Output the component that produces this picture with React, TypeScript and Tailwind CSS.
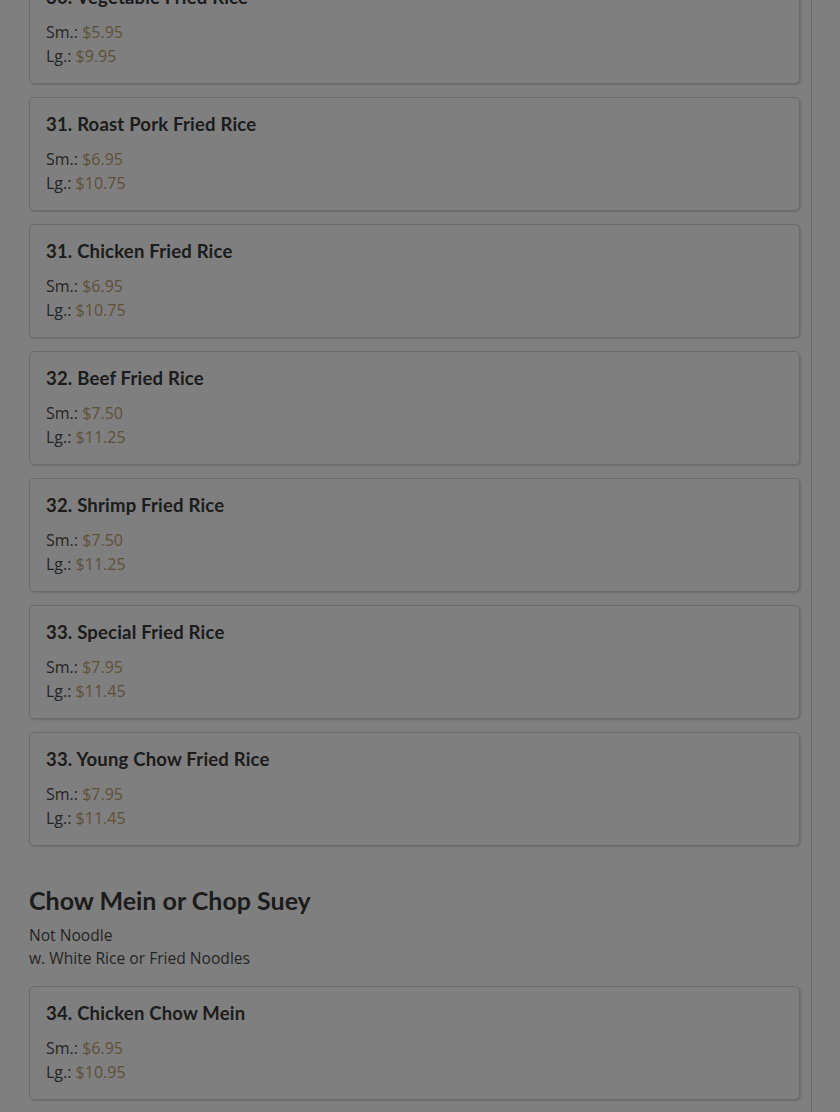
import React from "react";

type Item = { name: string; sm: string; lg: string };

const friedRice: Item[] = [
  { name: "30. Vegetable Fried Rice", sm: "$5.95", lg: "$9.95" },
  { name: "31. Roast Pork Fried Rice", sm: "$6.95", lg: "$10.75" },
  { name: "31. Chicken Fried Rice", sm: "$6.95", lg: "$10.75" },
  { name: "32. Beef Fried Rice", sm: "$7.50", lg: "$11.25" },
  { name: "32. Shrimp Fried Rice", sm: "$7.50", lg: "$11.25" },
  { name: "33. Special Fried Rice", sm: "$7.95", lg: "$11.45" },
  { name: "33. Young Chow Fried Rice", sm: "$7.95", lg: "$11.45" },
];

const chowMein: Item[] = [{ name: "34. Chicken Chow Mein", sm: "$6.95", lg: "$10.95" }];

const body = { fontFamily: '"Open Sans", "Lato", sans-serif' };

function Card({ item }: { item: Item }) {
  return (
    <div className="rounded-[5px] border border-[#d6d6d6] bg-white px-4 pt-4 pb-[15px] shadow-[1px_1px_2px_rgba(0,0,0,0.15)]">
      <h5 className="text-[18.5px] font-bold leading-[20px] tracking-[0.2px] text-[#383838]">{item.name}</h5>
      <div className="mt-[13px] text-[16px] leading-[24px] text-[#4a4a4a]" style={body}>
        <div>
          Sm.: <span className="text-[#bea070]">{item.sm}</span>
        </div>
        <div>
          Lg.: <span className="text-[#bea070]">{item.lg}</span>
        </div>
      </div>
    </div>
  );
}

export default function App() {
  return (
    <div
      className="relative min-h-[1112px] w-[840px] overflow-hidden bg-white"
      style={{ fontFamily: '"Lato", "Open Sans", sans-serif' }}
    >
      <div className="h-[1112px] w-[812px] overflow-hidden border-r border-[#d0d0d0]">
        <div className="-mt-[30px] pl-[29px] pr-[11px]">
          <div className="flex flex-col gap-[13px]">
            {friedRice.map((it) => (
              <Card key={it.name} item={it} />
            ))}
          </div>
          <h3 className="mt-[39px] text-[25px] font-bold leading-[30px] text-[#383838]">Chow Mein or Chop Suey</h3>
          <div className="mt-[9px] text-[15.6px] leading-[23px] text-[#4a4a4a]" style={body}>
            <div>Not Noodle</div>
            <div>w. White Rice or Fried Noodles</div>
          </div>
          <div className="mt-[16px] flex flex-col gap-[13px]">
            {chowMein.map((it) => (
              <Card key={it.name} item={it} />
            ))}
          </div>
        </div>
      </div>
      <div className="fixed inset-0 bg-black/50" />
    </div>
  );
}
